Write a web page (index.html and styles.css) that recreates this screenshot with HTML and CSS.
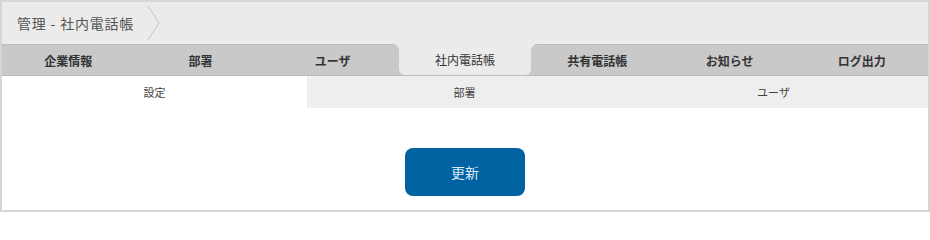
FILE: index.html
```html
<!DOCTYPE html>
<html lang="ja">
<head>
<meta charset="utf-8">
<title>管理 - 社内電話帳</title>
<link rel="stylesheet" href="styles.css">
</head>
<body>
<div class="frame">
  <header class="head">
    <h1 class="title">管理 - 社内電話帳</h1>
    <svg class="chev" width="14" height="36" viewBox="0 0 14 36"><polyline points="1,1 12,18 1,35" fill="none" stroke="#c4c4c4" stroke-width="1"/></svg>
  </header>
  <ul class="tabs">
    <li class="tab">企業情報</li>
    <li class="tab">部署</li>
    <li class="tab tab-prev">ユーザ</li>
    <li class="tab tab-active"><span class="tab-in">社内電話帳</span></li>
    <li class="tab tab-next">共有電話帳</li>
    <li class="tab">お知らせ</li>
    <li class="tab">ログ出力</li>
  </ul>
  <ul class="subtabs">
    <li class="sub sub-active">設定</li>
    <li class="sub">部署</li>
    <li class="sub">ユーザ</li>
  </ul>
  <div class="body">
    <button class="btn">更新</button>
  </div>
</div>
</body>
</html>
```
FILE: styles.css
```css
* { box-sizing: border-box; }
html, body { margin: 0; padding: 0; background: #fff; }
body { font-family: "Noto Sans CJK JP", "Noto Sans", sans-serif; }
.frame {
  width: 930px;
  height: 212px;
  border: 2px solid #d6d6d6;
  background: #fff;
  display: flex;
  flex-direction: column;
}
.head {
  height: 42px;
  background: #ebebeb;
  display: flex;
  align-items: center;
  padding-left: 15px;
}
.title {
  margin: 0;
  font-size: 14px;
  font-weight: normal;
  color: #555;
  letter-spacing: 0.8px;
}
.chev { margin-left: 13px; }
.tabs {
  list-style: none;
  margin: 0;
  padding: 0;
  display: flex;
  height: 32px;
  background: #ebebeb;
}
.tab {
  flex: 1 1 0;
  background: #c9c9c9;
  border-top: 1px solid #bdbdbd;
  border-bottom: 1px solid #b9b9b9;
  display: flex;
  align-items: center;
  justify-content: center;
  font-size: 12px;
  font-weight: bold;
  color: #333;
}
.tab-prev { border-top-right-radius: 7px; }
.tab-next { border-top-left-radius: 7px; }
.tab-active {
  background: #c9c9c9;
  border-top: 0;
  border-bottom: 1px solid #bdbdbd;
  padding: 0;
  align-items: stretch;
}
.tab-in {
  flex: 1;
  background: #ebebeb;
  border-radius: 0 0 6px 6px;
  display: flex;
  align-items: center;
  justify-content: center;
  font-weight: normal;
  color: #333;
}
.subtabs {
  list-style: none;
  margin: 0;
  padding: 0;
  display: flex;
  height: 32px;
  background: #eeeeee;
}
.sub {
  flex: 1 1 0;
  display: flex;
  align-items: center;
  justify-content: center;
  font-size: 11px;
  color: #444;
}
.sub-active {
  background: #fff;
  flex: 0 0 305px;
  margin-right: 2px;
  border-right: 0;
}
.sub-active + .sub { border-left: 1px solid #f6f6f6; }
.body {
  flex: 1;
  display: flex;
  justify-content: center;
  padding-top: 40px;
}
.btn {
  width: 120px;
  height: 48px;
  border: 0;
  border-radius: 8px;
  background: #0162a2;
  color: #dbe9f5;
  font-family: "Noto Sans CJK JP", "Noto Sans", sans-serif;
  font-size: 14px;
  padding: 0;
}
```
